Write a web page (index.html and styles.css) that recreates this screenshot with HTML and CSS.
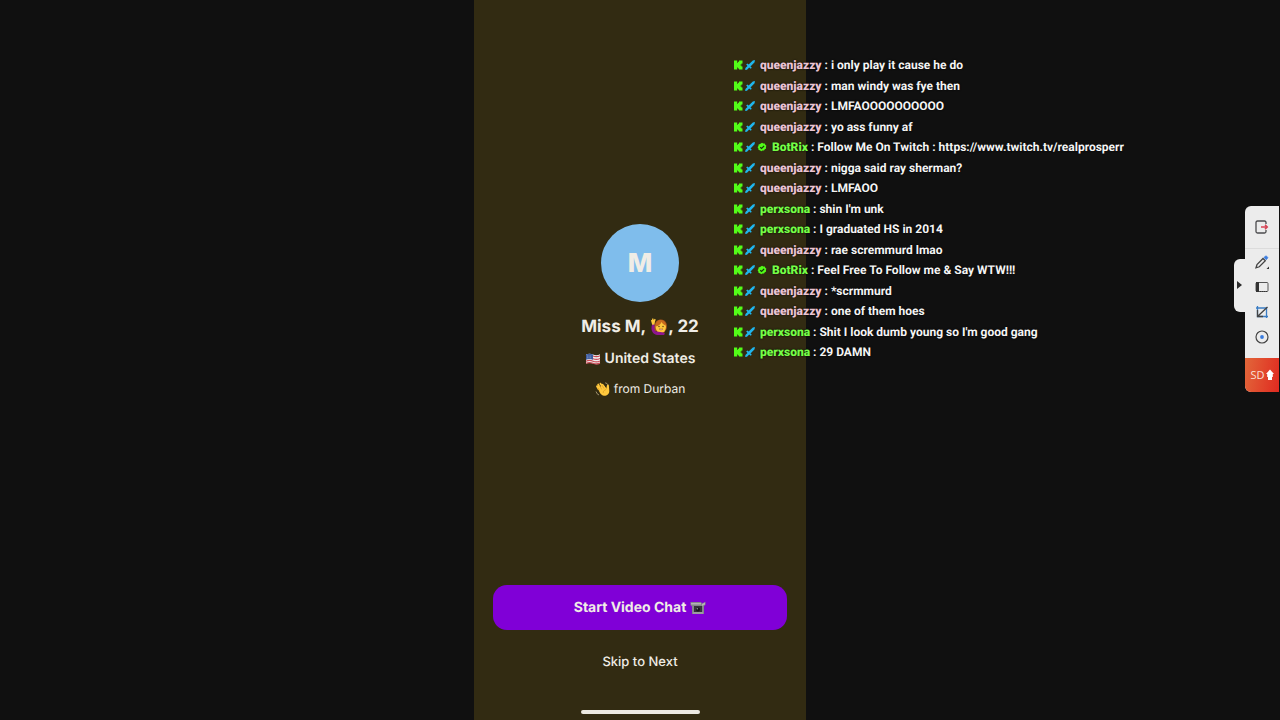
FILE: index.html
```html
<!DOCTYPE html>
<html lang="en">
<head>
  <meta charset="UTF-8" />
  <meta name="viewport" content="width=device-width, initial-scale=1.0"/>
  <title>Video Chat</title>
  <link rel="stylesheet" href="styles.css">
</head>
<body>
  <svg class="defs" aria-hidden="true">
    <symbol id="kick" viewBox="0 0 10 10">
      <path d="M1 .5h3.200v2.200H5v-1h1V.5h3.500v3h-1v1h-1v1h1v1h1v3H6v-1H5v-1h-.8v2H1z" fill="#53fc18"/>
    </symbol>
    <symbol id="sword" viewBox="0 0 10 10">
      <path d="M9.900 0 9.600 2.300 5.500 6.400 6.800 7.700 5.700 8.800 4.200 7.500 2 9.700.2 10 .4 8.100 2.500 5.900 1.200 4.500 2.300 3.400 3.700 4.600 7.800.4z" fill="#1fb6ee"/>
    </symbol>
    <symbol id="verified" viewBox="0 0 10 10">
      <path d="M5 .8 6.300 1.500 7.800 1.400 8.300 2.800 9.400 3.800 8.900 5.100 9.100 6.600 7.800 7.300 7 8.600 5.500 8.500 4.200 9.200 3 8.300 1.600 8 1.400 6.500.6 5.200 1.400 4 1.600 2.500 3 2z" fill="#53fc18"/>
      <path d="m3.200 5.200 1.400 1.300 2.500-2.700" fill="none" stroke="#17350d" stroke-width="1.200"/>
    </symbol>
  </svg>

  <main class="phone">
    <section class="profile">
      <div class="avatar">M</div>
      <h1 class="name">
        <span>Miss M,</span>
        <svg class="emoji-person" viewBox="0 0 18 18" role="img" aria-label="person raising hand">
          <path d="M4.500 16C1.500 14 .5 10 2.500 5.500L4.500 6 6 12z" fill="#8d168f"/>
          <path d="M5 13C3.500 7 5 2 10 1.500 15.500 1 18 6 16.500 11L14 15z" fill="#a6531b"/>
          <ellipse cx="10.800" cy="9" rx="5.200" ry="5.900" fill="#ffc83d"/>
          <path d="M5.500 8.500c3-.5 5-2 6-4.500 1 2 2.500 3 4.500 3.500-.5-4-3-5.500-5.500-5.500-3 0-5 2.500-5 6.500z" fill="#c96b1e"/>
          <path d="M.8 1.700 2 2.200 2.200.5 3.300.4l.4 1.600L4.800.8l.9.700-.8 2.500-.4 2.500-2.300.2z" fill="#ffc83d"/>
          <path d="M2.500 12c3 2.500 9 1 12.500 3.500L14 17H7c-2.500-.5-4-2-4.500-5z" fill="#8d168f"/>
          <circle cx="9" cy="8.500" r=".7" fill="#553111"/>
          <circle cx="13" cy="8.500" r=".7" fill="#553111"/>
          <path d="M9 11q2 2 4 0z" fill="#fff" stroke="#a34a1a" stroke-width=".5"/>
        </svg>
        <span>, 22</span>
      </h1>
      <p class="country">
        <svg class="emoji-flag" viewBox="0 0 16 12" role="img" aria-label="US flag">
          <path d="M1 1.500q3.500-1.500 7 0t7-.2v9.200q-3.500 1.500-7 0t-7 .2z" fill="#eee"/>
          <path d="M1 3q3.500-1.500 7 0t7-.2M1 5.700q3.500-1.500 7 0t7-.2M1 8.200q3.500-1.500 7 0t7-.2M1 10.300q3.500-1.300 7 0t7-.2" fill="none" stroke="#c94a55" stroke-width="1.200"/>
          <path d="M1 1.500Q4.500 0 8 1.500V6.700Q4.500 5.500 1 6.700z" fill="#3d5c9f"/>
          <path d="M2 3h5M2 4.800h5" stroke="#cbd5ee" stroke-width=".6" stroke-dasharray=".7 1"/>
        </svg>
        United States
      </p>
      <p class="city">
        <svg class="emoji-wave" viewBox="0 0 16 16" role="img" aria-label="waving hand">
          <path d="M3.500 8 2 5.300M5.800 8.500 3.200 3.500M8.500 8 5.500 2.600M10.500 8 7.600 3.800" stroke="#ffc83d" stroke-width="1.800" stroke-linecap="round"/>
          <path d="M2.500 6.500 9 4.500l2.300 3.200.6-3.200c.2-1.400 2-1.200 2 .2l.4 5.300c.1 3-2.500 5-5.300 4.800C6 14.500 4.500 11.500 2.500 6.500z" fill="#ffc83d"/>
          <path d="M4.300 9.500 3 7M6.800 8.500 4.800 5M9 7.600 7 4.200M8.200 12c0-2 1-3 3-3.500" fill="none" stroke="#c98818" stroke-width=".5"/>
          <path d="M10.200 1.800q2 .3 2.700 2M1 10.500q.7 2.700 3 3.500" fill="none" stroke="#b9a985" stroke-width=".8"/>
        </svg>
        from Durban
      </p>
    </section>

    <div class="actions">
      <button class="start" type="button">
        Start Video Chat
        <svg class="emoji-camera" viewBox="0 0 16 14" role="img" aria-label="camera">
          <path d="M.5 1H11l1 1.500L15.500.8v3L14 5v8H2V5.500L.5 4z" fill="#85858c"/>
          <path d="M1 2h10v1.500H1zM12 3l3-1.500v2L12 5z" fill="#b4b3b5"/>
          <path d="M4 5h8v6H4z" fill="#35333c"/>
          <circle cx="8" cy="8.500" r="2" fill="#17161b"/>
          <circle cx="7.300" cy="7.800" r=".7" fill="#9b9ba4"/>
          <path d="M3 12h10" stroke="#b4b3b5"/>
        </svg>
      </button>
      <button class="skip" type="button">Skip to Next</button>
    </div>
    <div class="home-bar"></div>
  </main>

  <ul class="chat">
    <li><svg class="badge"><use href="#kick"/></svg><svg class="badge sword"><use href="#sword"/></svg><b class="pink">queenjazzy</b> : i only play it cause he do</li>
    <li><svg class="badge"><use href="#kick"/></svg><svg class="badge sword"><use href="#sword"/></svg><b class="pink">queenjazzy</b> : man windy was fye then</li>
    <li><svg class="badge"><use href="#kick"/></svg><svg class="badge sword"><use href="#sword"/></svg><b class="pink">queenjazzy</b> : LMFAOOOOOOOOOO</li>
    <li><svg class="badge"><use href="#kick"/></svg><svg class="badge sword"><use href="#sword"/></svg><b class="pink">queenjazzy</b> : yo ass funny af</li>
    <li><svg class="badge"><use href="#kick"/></svg><svg class="badge sword"><use href="#sword"/></svg><svg class="badge check"><use href="#verified"/></svg><b class="green">BotRix</b> : Follow Me On Twitch : https://www.twitch.tv/realprosperr</li>
    <li><svg class="badge"><use href="#kick"/></svg><svg class="badge sword"><use href="#sword"/></svg><b class="pink">queenjazzy</b> : nigga said ray sherman?</li>
    <li><svg class="badge"><use href="#kick"/></svg><svg class="badge sword"><use href="#sword"/></svg><b class="pink">queenjazzy</b> : LMFAOO</li>
    <li><svg class="badge"><use href="#kick"/></svg><svg class="badge sword"><use href="#sword"/></svg><b class="green">perxsona</b> : shin I'm unk</li>
    <li><svg class="badge"><use href="#kick"/></svg><svg class="badge sword"><use href="#sword"/></svg><b class="green">perxsona</b> : I graduated HS in 2014</li>
    <li><svg class="badge"><use href="#kick"/></svg><svg class="badge sword"><use href="#sword"/></svg><b class="pink">queenjazzy</b> : rae scremmurd lmao</li>
    <li><svg class="badge"><use href="#kick"/></svg><svg class="badge sword"><use href="#sword"/></svg><svg class="badge check"><use href="#verified"/></svg><b class="green">BotRix</b> : Feel Free To Follow me &amp; Say WTW!!!</li>
    <li><svg class="badge"><use href="#kick"/></svg><svg class="badge sword"><use href="#sword"/></svg><b class="pink">queenjazzy</b> : *scrmmurd</li>
    <li><svg class="badge"><use href="#kick"/></svg><svg class="badge sword"><use href="#sword"/></svg><b class="pink">queenjazzy</b> : one of them hoes</li>
    <li><svg class="badge"><use href="#kick"/></svg><svg class="badge sword"><use href="#sword"/></svg><b class="green">perxsona</b> : Shit I look dumb young so I'm good gang</li>
    <li><svg class="badge"><use href="#kick"/></svg><svg class="badge sword"><use href="#sword"/></svg><b class="green">perxsona</b> : 29 DAMN</li>
  </ul>

  <aside class="dock">
    <button class="handle" type="button" aria-label="Collapse toolbar">
      <svg width="5" height="8" viewBox="0 0 5 8"><path d="M0 0l5 4-5 4z" fill="#2b2b2b"/></svg>
    </button>
    <div class="tools">
      <button class="tool exit" type="button" aria-label="Exit">
        <svg width="16" height="16" viewBox="0 0 16 16" fill="none" stroke="#4b4b4d" stroke-width="1.300">
          <path d="M12 5V3.500Q12 2 10.500 2h-7Q2 2 2 3.500v9Q2 14 3.500 14h7q1.500 0 1.500-1.500V11"/>
          <path d="M7 8h6M11 5.800 13.300 8 11 10.200" stroke="#d64354" stroke-width="1.500"/>
        </svg>
      </button>
      <button class="tool" type="button" aria-label="Pen">
        <svg width="16" height="16" viewBox="0 0 16 16" fill="none" stroke="#444" stroke-width="1.300">
          <path d="M2 13.800 3 10.500 9 4.500 11.300 6.800 5.300 12.800z"/>
          <path d="m10 3.500 1.300-1.200q.8-.7 1.600.1l.5.500q.8.800 0 1.600L12.200 5.700z" fill="#3b7de0" stroke="#3b7de0" stroke-width=".8"/>
          <path d="M15 12.500V15h-2.500z" fill="#333" stroke="none"/>
        </svg>
      </button>
      <button class="tool" type="button" aria-label="Whiteboard">
        <svg width="16" height="16" viewBox="0 0 16 16">
          <rect x="2" y="3.500" width="12" height="9" rx="1" fill="none" stroke="#555"/>
          <path d="M2 3h3v10H2z" fill="#333"/>
          <path d="M6 12.500h7" stroke="#333" stroke-dasharray="1 1"/>
        </svg>
      </button>
      <button class="tool" type="button" aria-label="Crop">
        <svg width="16" height="16" viewBox="0 0 16 16" fill="none" stroke-width="1.300">
          <path d="M3.500 2v10.500H14M2 4h10.500v10" stroke="#3b7dc4"/>
          <path d="M3.500 6v6.500H9M4 12l9.500-9" stroke="#444"/>
        </svg>
      </button>
      <button class="tool" type="button" aria-label="Record">
        <svg width="16" height="16" viewBox="0 0 16 16">
          <circle cx="8" cy="8" r="6" fill="none" stroke="#444" stroke-width="1.200"/>
          <circle cx="8" cy="8" r="1.900" fill="#3b7de0"/>
        </svg>
      </button>
      <button class="quality" type="button">SD
        <svg width="8" height="12" viewBox="0 0 8 12"><path d="M4 .5 8 5H6.800v3H6v3H2V8h-.8V5H0z" fill="#fff"/></svg>
      </button>
    </div>
  </aside>
</body>
</html>
```

FILE: styles.css
```css
* {
  margin: 0;
  padding: 0;
  box-sizing: border-box;
}

body {
  position: relative;
  display: flex;
  justify-content: center;
  min-height: 100vh;
  background: #101010;
  color: #f0ede6;
  font-family: Inter, sans-serif;
  text-rendering: geometricPrecision;
  overflow: hidden;
}

button {
  border: none;
  background: none;
  color: inherit;
  font-family: inherit;
  text-rendering: inherit;
  cursor: pointer;
}

svg {
  flex: none;
}

.defs {
  position: absolute;
  width: 0;
  height: 0;
}

/* phone column */
.phone {
  display: flex;
  flex-direction: column;
  align-items: center;
  min-height: 100vh;
  aspect-ratio: 83 / 180;
  padding: 224px 19px 6px;
  background: #322b12;
}

.profile {
  display: flex;
  flex-direction: column;
  align-items: center;
}

.avatar {
  display: flex;
  align-items: center;
  justify-content: center;
  width: 78px;
  height: 78px;
  border-radius: 50%;
  background: #7fbdec;
  font-size: 26px;
  font-weight: 800;
}

.name {
  display: flex;
  align-items: center;
  margin-top: 13px;
  font-size: 17px;
  font-weight: 700;
  line-height: 24px;
}

.emoji-person {
  width: 18px;
  height: 18px;
  margin-left: 4px;
}

.country {
  display: flex;
  align-items: center;
  gap: 4px;
  margin-top: 10px;
  font-size: 14px;
  font-weight: 600;
  line-height: 20px;
}

.emoji-flag {
  width: 16px;
  height: 12px;
}

.city {
  display: flex;
  align-items: center;
  gap: 3px;
  margin-top: 10px;
  font-size: 12px;
  line-height: 20px;
}

.emoji-wave {
  width: 16px;
  height: 16px;
}

.actions {
  display: flex;
  flex-direction: column;
  align-self: stretch;
  gap: 20px;
  margin-top: auto;
}

.start {
  display: flex;
  align-items: center;
  justify-content: center;
  gap: 4px;
  height: 45px;
  border-radius: 14px;
  background: #8000d7;
  font-size: 14px;
  font-weight: 700;
}

.emoji-camera {
  width: 16px;
  height: 14px;
}

.skip {
  font-size: 13px;
  font-weight: 500;
  line-height: 24px;
}

.home-bar {
  width: 119px;
  height: 4px;
  margin-top: 36px;
  border-radius: 2px;
  background: #ece9e2;
}

/* stream chat, floats over the phone */
.chat {
  position: absolute;
  top: 55px;
  bottom: 358px;
  left: 733px;
  display: flex;
  flex-direction: column;
  justify-content: space-between;
  list-style: none;
  color: #f4f4f4;
  font-family: Roboto, sans-serif;
  font-size: 12px;
  font-weight: 700;
  line-height: 20px;
  white-space: nowrap;
  text-shadow: 0 0 2px #000;
}

.badge {
  width: 10px;
  height: 10px;
  margin-right: 2px;
  vertical-align: -1px;
}

.sword {
  margin-right: 5px;
}

.sword:has(+ .check) {
  margin-right: 2px;
}

.check {
  margin-right: 5px;
}

.pink {
  color: #eac3d2;
}

.green {
  color: #75fd46;
}

/* capture toolbar */
.dock {
  position: absolute;
  top: 206px;
  right: 1px;
  display: flex;
  align-items: center;
}

.handle {
  display: flex;
  align-items: center;
  justify-content: center;
  width: 11px;
  height: 53px;
  margin-bottom: 28px;
  border-radius: 6px 0 0 6px;
  background: #ececec;
}

.tools {
  width: 34px;
  border-radius: 6px 0 0 6px;
  background: #ececec;
  overflow: hidden;
}

.tool {
  display: flex;
  align-items: center;
  justify-content: center;
  width: 100%;
  height: 25px;
}

.exit {
  height: 43px;
  border-bottom: 1px solid #dcdcdc;
}

.quality {
  display: flex;
  align-items: center;
  justify-content: center;
  gap: 1px;
  width: 100%;
  height: 34px;
  margin-top: 9px;
  background: linear-gradient(100deg, #e2673a, #e02a20);
  color: #fbe4dc;
  font-family: "Open Sans", sans-serif;
  font-size: 11px;
}
```
